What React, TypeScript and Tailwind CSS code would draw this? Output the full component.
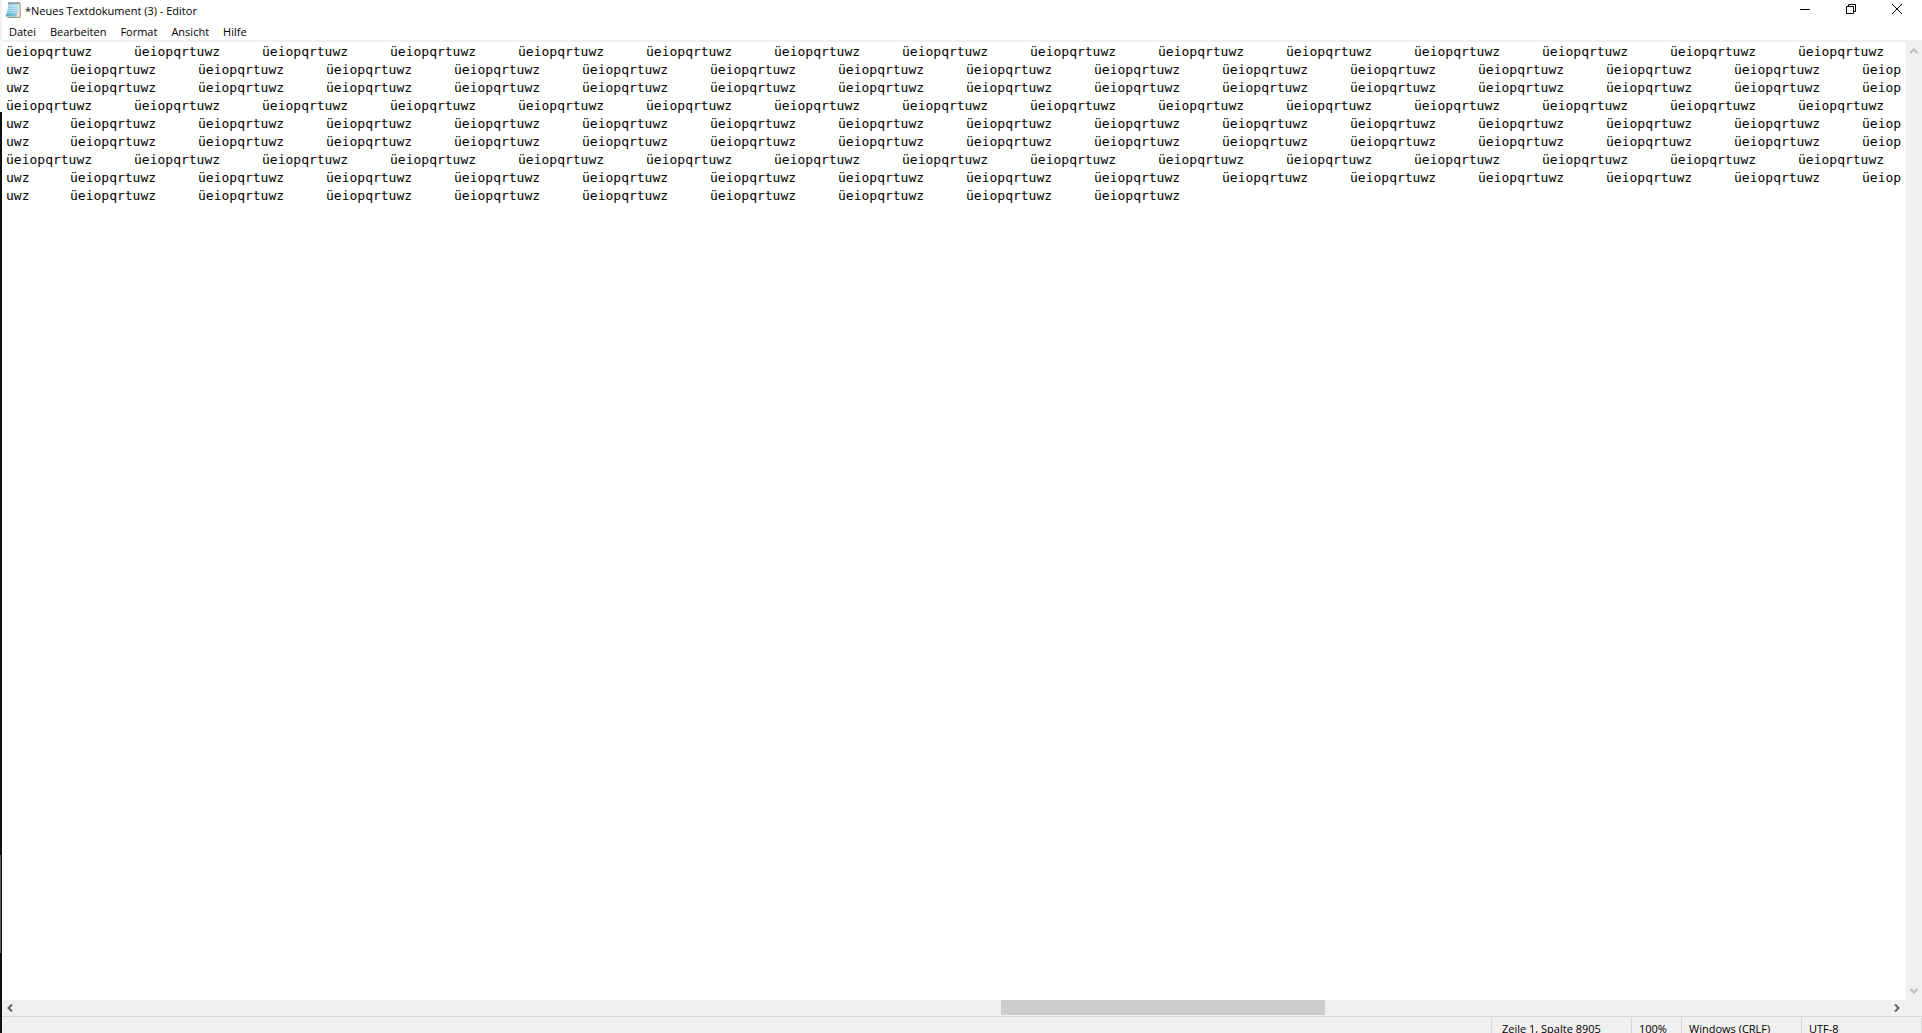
import { useState } from "react";

const WORD = "üeiopqrtuwz";

const repeatWord = (count: number) => Array(count).fill(WORD).join("\t");

const fullLine = repeatWord(15);
const wrappedLine = "uwz\t" + repeatWord(14) + "\tüeiop";
const lastLine = "uwz\t" + repeatWord(9);

const initialText = [fullLine, wrappedLine, wrappedLine, fullLine, wrappedLine, wrappedLine, fullLine, wrappedLine, lastLine].join("\n");

const menuItems = ["Datei", "Bearbeiten", "Format", "Ansicht", "Hilfe"];

function NotepadIcon() {
  return (
    <svg width="16" height="16" viewBox="0 0 16 16" aria-hidden="true">
      <defs>
        <linearGradient id="cover" x1="1" y1="0" x2="0" y2="1">
          <stop offset="0" stopColor="#c4e6f0" />
          <stop offset="0.5" stopColor="#8ccade" />
          <stop offset="1" stopColor="#4fa3c2" />
        </linearGradient>
      </defs>
      <path d="M4 1.5H15V15.5H2.5L2 14.5Z" fill="#efe9da" />
      <path d="M15.2 1.5V15.4H2.5" fill="none" stroke="#8d8474" strokeWidth="0.9" />
      <path d="M3.2 1.5H13.6C13.6 7 13 11 11 14.6H0.3C2.2 11 3 7 3.2 1.5Z" fill="url(#cover)" />
      <path d="M3.2 4.5H13M3 6.5H12.8M2.6 8.5H12.4M2.1 10.5H12" stroke="#d3eef6" strokeWidth="0.6" />
      <path d="M3.5 1H14.5" stroke="#4a5a60" strokeWidth="1.8" strokeDasharray="1 1" />
    </svg>
  );
}

function Chevron({ path, color }: { path: string; color: string }) {
  return (
    <svg width="8" height="8" viewBox="0 0 8 8" fill="none" stroke={color} strokeWidth="2" aria-hidden="true">
      <path d={path} />
    </svg>
  );
}

function TitleBar() {
  return (
    <header className="flex h-5 items-center justify-between">
      <div className="flex items-center gap-1 pl-[3px]">
        <NotepadIcon />
        <h1 className="pt-[2px] text-[11px] leading-4">*Neues Textdokument (3) - Editor</h1>
      </div>
      <div className="flex h-5 pr-[2px]">
        <button type="button" aria-label="Minimieren" className="flex w-[46px] justify-center pt-1">
          <svg width="10" height="10" viewBox="0 0 10 10" stroke="#000" fill="none">
            <path d="M0 5.5H10" />
          </svg>
        </button>
        <button type="button" aria-label="Verkleinern" className="flex w-[46px] justify-center pt-1">
          <svg width="10" height="10" viewBox="0 0 10 10" stroke="#000" fill="none">
            <path d="M0.5 2.5H7.5V9.5H0.5ZM2.5 2.5V0.5H9.5V7.5H7.5" />
          </svg>
        </button>
        <button type="button" aria-label="Schließen" className="flex w-[46px] justify-center pt-1">
          <svg width="10" height="10" viewBox="0 0 10 10" stroke="#000" fill="none">
            <path d="M0 0L10 10M10 0L0 10" />
          </svg>
        </button>
      </div>
    </header>
  );
}

function StatusBar() {
  return (
    <footer className="flex h-[17px] shrink-0 justify-end overflow-hidden border-t border-[#d7d7d7] bg-[#f0f0f0] pt-px text-[11px] leading-5">
      <p className="w-[140px] shrink-0 border-l border-[#d7d7d7] pl-[10px] pt-px">Zeile 1, Spalte 8905</p>
      <p className="w-[50px] shrink-0 border-l border-[#d7d7d7] pl-[7px] pt-px">100%</p>
      <p className="w-[120px] shrink-0 border-l border-[#d7d7d7] pl-[7px] pt-px">Windows (CRLF)</p>
      <p className="w-[121px] shrink-0 border-x border-[#d7d7d7] pl-[7px] pt-px">UTF-8</p>
    </footer>
  );
}

const App = () => {
  const [text, setText] = useState(initialText);

  return (
    <div className="flex h-screen overflow-hidden bg-white font-['Open_Sans',sans-serif] text-black">
      {/* desktop behind the window */}
      <div className="flex w-[2px] shrink-0 flex-col bg-[#111111]">
        <div className="h-10 bg-[#f0f0f0]"></div>
        <div className="h-[72px] bg-[#fafafa]"></div>
        <div className="grow"></div>
        <div className="mb-20 h-[98px] w-px bg-[#5c5c5c]"></div>
      </div>

      <div className="flex min-w-0 grow flex-col">
        <TitleBar />

        <nav className="flex h-[22px] border-b-2 border-[#f0f0f0]">
          {menuItems.map((item) => (
            <button type="button" key={item} className="px-[7px] pt-[3px] text-[11px] leading-4">
              {item}
            </button>
          ))}
        </nav>

        <main className="flex min-h-0 grow">
          <textarea
            aria-label="Text"
            value={text}
            onChange={(e) => setText(e.target.value)}
            spellCheck={false}
            wrap="off"
            className="min-w-0 grow resize-none overflow-hidden whitespace-pre pl-1 pt-px font-['DejaVu_Sans_Mono',monospace] text-[13px] leading-[18px] outline-none [tab-size:64px]"
          />
          <div className="flex w-4 shrink-0 flex-col items-center justify-between bg-[#f0f0f0] py-[5px]">
            <button type="button" aria-label="Nach oben">
              <Chevron path="M0.5 6L4 2.5L7.5 6" color="#bfbfbf" />
            </button>
            <button type="button" aria-label="Nach unten">
              <Chevron path="M0.5 2L4 5.5L7.5 2" color="#bfbfbf" />
            </button>
          </div>
        </main>

        <div className="flex h-4 shrink-0 bg-[#f0f0f0] pr-4">
          <button type="button" aria-label="Nach links" className="flex w-4 items-center justify-center">
            <Chevron path="M6 0.5L2.5 4L6 7.5" color="#606060" />
          </button>
          <div className="flex grow">
            <div className="w-[52.5%]"></div>
            <div className="mb-px w-[324px] bg-[#cdcdcd]"></div>
          </div>
          <button type="button" aria-label="Nach rechts" className="flex w-4 items-center justify-center">
            <Chevron path="M1 0.5L4.5 4L1 7.5" color="#606060" />
          </button>
        </div>

        <StatusBar />
      </div>
    </div>
  );
};

export default App;
